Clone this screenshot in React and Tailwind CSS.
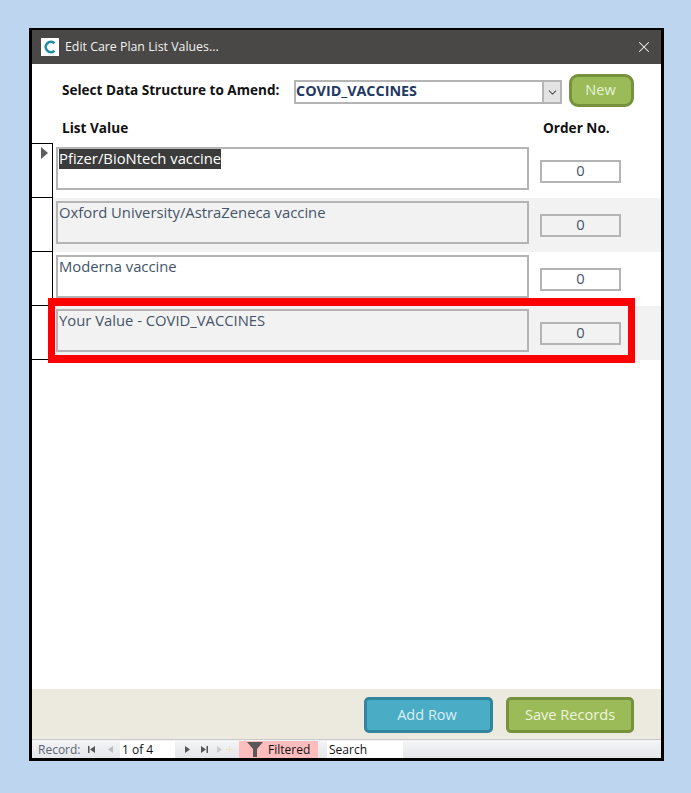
import { ChevronDown, X } from 'lucide-react'

const rows = [
	{ name: 'Pfizer/BioNtech vaccine', selected: true },
	{ name: 'Oxford University/AstraZeneca vaccine', alt: true },
	{ name: 'Moderna vaccine' },
	{ name: 'Your Value - COVID_VACCINES', alt: true },
]

const Row = ({ row }) => (
	<div className={`flex h-[54px] ${row.alt ? 'bg-[#f2f2f2]' : 'bg-white'}`}>
		{/* Record selector */}
		<div className="h-[54px] w-[21px] shrink-0 border-r border-b border-black bg-white pt-[3px] pl-[9px]">
			{row.selected && (
				<svg width="7" height="12" viewBox="0 0 7 12">
					<path d="M0 0 L7 6 L0 12 Z" fill="#5f5f5f" />
				</svg>
			)}
		</div>
		<div className={`ml-[3px] mt-[3px] h-[43px] w-[473px] border-2 border-[#b4b4b4] pl-[1px] text-[14.8px] leading-[18px] text-[#44546a] ${row.alt ? 'bg-[#f2f2f2]' : 'bg-white'}`}>
			<span className={row.selected ? '-mt-[1px] inline-block bg-[#3b3b3b] pb-[2px] text-white' : '-mt-[1px] inline-block pb-[2px]'}>{row.name}</span>
		</div>
		<div className={`ml-[11px] mt-[16px] flex h-[23px] w-[81px] items-center justify-center border-2 border-[#b4b4b4] pb-[2px] text-[14.7px] text-[#44546a] ${row.alt ? 'bg-[#f2f2f2]' : 'bg-white'}`}>
			0
		</div>
	</div>
)

const NavArrow = ({ d, fill = '#555555' }) => (
	<svg width="9" height="9" viewBox="0 0 9 9" className="shrink-0">
		<path d={d} fill={fill} />
	</svg>
)

export default function App() {
	return (
		<div className="h-[793px] w-[691px] bg-[#bdd5ee] pl-[29px] pt-[28px] font-['Open_Sans',sans-serif]">
			<div className="relative flex h-[733px] w-[635px] flex-col border-x-[3px] border-t-2 border-b-[3px] border-black bg-white">
				{/* Title bar */}
				<div className="flex h-[34px] shrink-0 items-center bg-[#4a4846] pl-[9px] pr-[8px] text-[#f2f2f2]">
					<div className="flex h-[18px] w-[18px] items-center justify-center bg-white">
						<svg width="14" height="14" viewBox="0 0 14 14">
							<path d="M11.5 3.2 A5.2 5.2 0 1 0 11.5 10.8" fill="none" stroke="#1f8ea3" strokeWidth="2.6" />
						</svg>
					</div>
					<span className="ml-[6px] text-[12.35px]">Edit Care Plan List Values...</span>
					<X size={18} strokeWidth={1.4} className="ml-auto" />
				</div>

				{/* Structure picker */}
				<div className="flex h-[53px] shrink-0 items-center pl-[30px]">
					<span className="w-[232px] text-[13.55px] font-bold text-[#111111]">Select Data Structure to Amend:</span>
					<div className="mt-[3px] flex h-[24px] w-[268px] items-center justify-between border-2 border-[#b4b4b4] bg-white pb-[2px] text-[14.35px] font-bold text-[#1f3864]">
						COVID_VACCINES
						<div className="-mb-[2px] flex h-[20px] w-[18px] items-center justify-center border-l-2 border-[#b4b4b4] bg-[#e3e3e3]">
							<ChevronDown size={13} className="text-[#555555]" />
						</div>
					</div>
					<button className="ml-[7px] h-[33px] w-[65px] rounded-[9px] border-[3px] border-[#76923c] bg-[#9bbb59] pr-[2px] pb-[2px] text-[14.5px] text-[#e6f3d6]">New</button>
				</div>

				{/* Column headings */}
				<div className="flex h-[26px] shrink-0 items-center pb-[4px] pl-[30px] text-[13.6px] font-bold text-[#111111]">
					<span className="w-[481px]">List Value</span>
					<span>Order No.</span>
				</div>

				<div className="h-px w-[21px] shrink-0 bg-black"></div>
				<div>
					{rows.map((row) => <Row key={row.name} row={row} />)}
				</div>

				<div className="flex-1 bg-white"></div>

				{/* Footer */}
				<div className="flex h-[50px] shrink-0 items-center justify-end gap-[13px] bg-[#ece9df] pr-[27px] pt-[2px]">
					<button className="h-[36px] w-[129px] rounded-[5px] border-[3px] border-[#31859c] bg-[#4bacc6] pr-[3px] text-[14.5px] text-[#dceff5]">Add Row</button>
					<button className="h-[36px] w-[128px] rounded-[5px] border-[3px] border-[#76923c] bg-[#9bbb59] text-[14.6px] text-[#eef5dc]">Save Records</button>
				</div>

				{/* Record navigation */}
				<div className="flex h-[19px] shrink-0 items-end border-t border-[#c8c8c8] bg-gradient-to-b from-[#f4f5f7] to-[#e4e6ea] pl-[6px] text-[12px] leading-[17px] text-[#111111]">
					<span className="w-[49px] text-[#5a6470]">Record:</span>
					<div className="flex h-[17px] items-center">
						<NavArrow d="M1 1 H2.5 V8 H1 Z M8 1 V8 L3 4.5 Z" />
						<div className="w-[10px]"></div>
						<NavArrow d="M7 1 V8 L2 4.5 Z" fill="#bbbbbb" />
					</div>
					<div className="ml-[5px] h-[17px] w-[55px] bg-white pl-[2px]">1 of 4</div>
					<div className="flex h-[17px] items-center">
						<div className="w-[8px]"></div>
						<NavArrow d="M2 1 V8 L7 4.5 Z" />
						<div className="w-[8px]"></div>
						<NavArrow d="M1 1 V8 L6 4.5 Z M6.5 1 H8 V8 H6.5 Z" />
						<div className="w-[7px]"></div>
						<NavArrow d="M1 1 V8 L6 4.5 Z" fill="#cccccc" />
						<NavArrow d="M4 1 H5 V8 H4 Z M1 4 H8 V5 H1 Z" fill="#f3e2c0" />
					</div>
					<div className="ml-[5px] flex h-[17px] w-[79px] items-center bg-[#ffbdbd] pl-[8px]">
						<svg width="16" height="15" viewBox="0 0 16 15" className="shrink-0">
							<path d="M0 0 H16 L10 7 V15 H6 V7 Z" fill="#595959" />
						</svg>
						<span className="ml-[5px]">Filtered</span>
					</div>
					<div className="ml-[9px] h-[17px] w-[76px] bg-white pl-[2px]">Search</div>
				</div>

				{/* Highlight drawn over the last row */}
				<div className="absolute left-[16px] top-[268px] h-[65px] w-[587px] border-x-[7px] border-y-[8px] border-[#ff0000]"></div>
			</div>
		</div>
	)
}
